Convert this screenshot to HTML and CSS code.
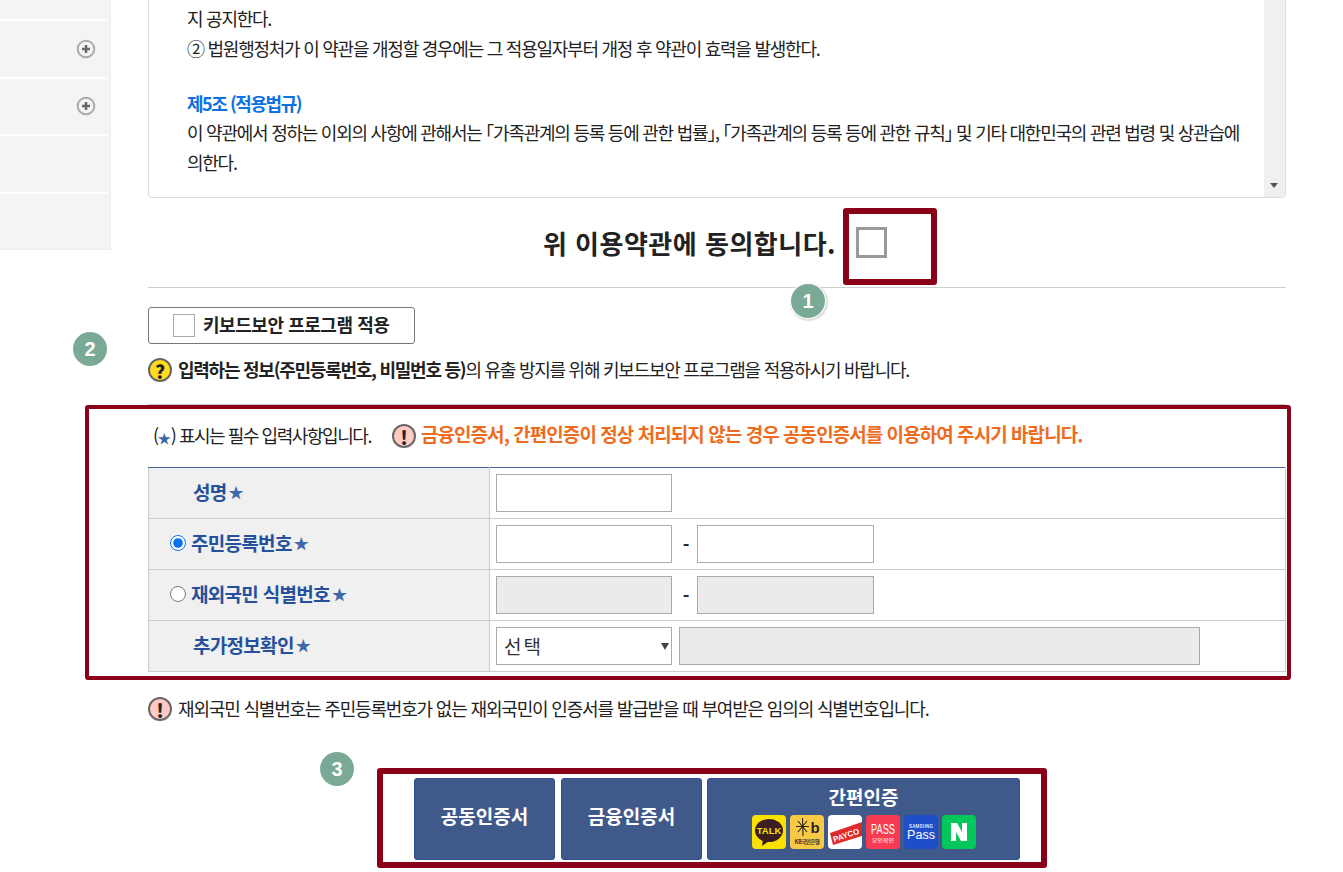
FILE: index.html
```html
<!DOCTYPE html>
<html lang="ko">
<head>
<meta charset="utf-8">
<title>이용약관 동의</title>
<link rel="stylesheet" href="styles.css">
</head>
<body>
<div class="page">
  <aside class="sidebar">
    <div class="side-row"></div>
    <div class="side-row"><svg class="plus" viewBox="0 0 20 20"><circle cx="10" cy="10" r="8.300"/><path d="M10 6v8M6 10h8"/></svg></div>
    <div class="side-row"><svg class="plus" viewBox="0 0 20 20"><circle cx="10" cy="10" r="8.300"/><path d="M10 6v8M6 10h8"/></svg></div>
    <div class="side-row"></div>
    <div class="side-row side-last"></div>
  </aside>
  <main class="main">
    <section class="terms">
      <div class="terms-text">
        <p>지 공지한다.</p>
        <p>② 법원행정처가 이 약관을 개정할 경우에는 그 적용일자부터 개정 후 약관이 효력을 발생한다.</p>
        <p class="blank">&nbsp;</p>
        <p class="article">제5조 (적용법규)</p>
        <p>이 약관에서 정하는 이외의 사항에 관해서는 ｢가족관계의 등록 등에 관한 법률｣, ｢가족관계의 등록 등에 관한 규칙｣ 및 기타 대한민국의 관련 법령 및 상관습에<br>의한다.</p>
      </div>
      <div class="scrollbar"><span class="scroll-arrow"></span></div>
    </section>
    <div class="agree">
      <span class="agree-text">위 이용약관에 동의합니다.</span>
      <span class="agree-check"></span>
    </div>
    <div class="kbd-btn"><span class="kbd-check"></span><span class="kbd-text">키보드보안 프로그램 적용</span></div>
    <p class="help"><span class="ico ico-q">?</span><span class="tx"><b>입력하는 정보(주민등록번호, 비밀번호 등)</b>의 유출 방지를 위해 키보드보안 프로그램을 적용하시기 바랍니다.</span></p>
    <div class="rule"></div>
    <div class="notice">
      <span class="req-note">(<i class="star">★</i>) 표시는 필수 입력사항입니다.</span>
      <span class="ico ico-ex">!</span>
      <strong class="warn">금융인증서, 간편인증이 정상 처리되지 않는 경우 공동인증서를 이용하여 주시기 바랍니다.</strong>
    </div>
    <table class="form">
      <tr>
        <th><span class="lbl lbl-plain">성명<i class="star">★</i></span></th>
        <td><input class="field f1" type="text"></td>
      </tr>
      <tr>
        <th><span class="lbl"><input class="radio" type="radio" name="idt" checked>주민등록번호<i class="star">★</i></span></th>
        <td><input class="field f1" type="text"><span class="dash">-</span><input class="field f2" type="text"></td>
      </tr>
      <tr>
        <th><span class="lbl"><input class="radio" type="radio" name="idt">재외국민 식별번호<i class="star">★</i></span></th>
        <td><input class="field f1 off" type="text"><span class="dash">-</span><input class="field f2 off" type="text"></td>
      </tr>
      <tr>
        <th><span class="lbl lbl-plain">추가정보확인<i class="star">★</i></span></th>
        <td><span class="sel-wrap"><select class="field f1 sel"><option>선택</option></select></span><input class="field f3 off" type="text"></td>
      </tr>
    </table>
    <p class="foot"><span class="ico ico-ex">!</span><span class="tx">재외국민 식별번호는 주민등록번호가 없는 재외국민이 인증서를 발급받을 때 부여받은 임의의 식별번호입니다.</span></p>
    <div class="actions">
      <button class="act act-a" type="button">공동인증서</button>
      <button class="act act-a" type="button">금융인증서</button>
      <button class="act act-b" type="button">
        <span class="act-title">간편인증</span>
        <span class="logos">
          <span class="logo l-talk"><svg viewBox="0 0 34 34"><ellipse cx="17" cy="15.500" rx="14" ry="11.500" fill="#3c1e1e"/><path d="M11 24l-1 7 7-5z" fill="#3c1e1e"/><text x="17" y="19" text-anchor="middle" class="t-talk">TALK</text></svg></span>
          <span class="logo l-kb"><svg viewBox="0 0 34 34"><path d="M8 6l9 11M17 6L8 17M12.500 3l.5 18M6 11.500h13" stroke="#2a2520" stroke-width="1.100" fill="none"/><text x="25" y="18" text-anchor="middle" class="t-kb">b</text><text x="17" y="29" text-anchor="middle" class="t-kbs">KB국민은행</text></svg></span>
          <span class="logo l-payco"><svg viewBox="0 0 34 34"><path d="M2 18L34 7v14L5 30z" fill="#e02a2a"/><text x="18" y="23" text-anchor="middle" transform="rotate(-19 18 20)" class="t-payco">PAYCO</text></svg></span>
          <span class="logo l-pass"><svg viewBox="0 0 34 34"><text x="17" y="19" text-anchor="middle" textLength="24" lengthAdjust="spacingAndGlyphs" class="t-pass">PASS</text><text x="17" y="27" text-anchor="middle" textLength="22" lengthAdjust="spacingAndGlyphs" class="t-pass-s">본인확인</text></svg></span>
          <span class="logo l-sp"><svg viewBox="0 0 34 34"><text x="17" y="13" text-anchor="middle" textLength="24" class="t-sp-s">SAMSUNG</text><text x="17" y="24" text-anchor="middle" class="t-sp">Pass</text></svg></span>
          <span class="logo l-n"><svg viewBox="0 0 34 34"><path d="M9 8h6l5 9V8h5v18h-6l-5-9v9H9z" fill="#fff"/></svg></span>
        </span>
      </button>
    </div>
  </main>

  <div class="mark mark-1"></div>
  <div class="mark mark-2"></div>
  <div class="mark mark-3"></div>
  <div class="badge badge-1">1</div>
  <div class="badge badge-2">2</div>
  <div class="badge badge-3">3</div>
</div>
</body>
</html>
```

FILE: styles.css
```css
* { box-sizing: border-box; }
html, body { margin: 0; padding: 0; background: #fff; }
body {
  font-family: "Noto Sans CJK KR", "Noto Sans", sans-serif;
  color: #222;
  font-size: 18px;
}
p { margin: 0; }
i { font-style: normal; }

.page {
  position: relative;
  display: flex;
  align-items: flex-start;
  width: 1343px;
  height: 872px;
  overflow: hidden;
}

/* side menu */
.sidebar {
  flex: none;
  width: 111px;
  margin-top: -36.500px;
  padding-right: 3px;
  background: #f4f4f4;
  border-bottom: 1px solid #ececec;
  border-right: 1px solid #efefef;
}
.side-row {
  display: flex;
  align-items: center;
  justify-content: flex-end;
  height: 57.500px;
  padding-right: 11px;
  border-bottom: 2px solid #fff;
}
.side-last { height: 55.500px; border-bottom: 0; }
.plus { width: 20px; height: 20px; }
.plus circle { fill: #f4f4f4; stroke: #aaa; stroke-width: 2; }
.plus path { stroke: #666; stroke-width: 2.500; fill: none; }

/* content */
.main {
  flex: none;
  width: 1138px;
  margin-left: 37px;
}
.terms {
  display: flex;
  height: 198px;
  border: 1px solid #ddd;
  border-top: 0;
  border-radius: 0 0 4px 4px;
}
.terms-text {
  flex: 1;
  padding: 4px 0 0 38px;
  font-size: 18px;
  line-height: 29.500px;
  letter-spacing: -1.250px;
  white-space: nowrap;
  color: #222;
}
.blank { height: 25.500px; line-height: 25.500px; }
.article { color: #0b72e0; font-weight: 700; letter-spacing: -1.450px; }
.scrollbar {
  position: relative;
  flex: none;
  width: 21px;
  background: #f0f0f0;
}
.scroll-arrow {
  position: absolute;
  left: 6px;
  bottom: 9px;
  border-left: 4.500px solid transparent;
  border-right: 4.500px solid transparent;
  border-top: 5px solid #555;
}

.agree {
  display: flex;
  align-items: center;
  justify-content: center;
  gap: 20px;
  height: 90px;
  padding-right: 4px;
  border-bottom: 1px solid #ccc;
}
.agree-text {
  font-size: 26px;
  font-weight: 700;
  letter-spacing: 0.500px;
  color: #222;
}
.agree-check {
  width: 31px;
  height: 31px;
  border: 3px solid #999;
  background: #fff;
}

.kbd-btn {
  display: flex;
  align-items: center;
  gap: 8px;
  width: 267px;
  height: 37px;
  margin-top: 19px;
  padding-left: 23px;
  border: 1px solid #777;
  border-radius: 3px;
  font-size: 18px;
  font-weight: 700;
  letter-spacing: -0.450px;
}
.kbd-check {
  flex: none;
  width: 22px;
  height: 23px;
  margin-left: 1px;
  border: 1px solid #aaa;
}
.kbd-text { padding-bottom: 3px; }

.ico {
  display: inline-flex;
  flex: none;
  align-items: center;
  justify-content: center;
  width: 24px;
  height: 24px;
  border: 2px solid #666;
  border-radius: 50%;
  font-size: 19px;
  font-weight: 900;
  line-height: 1;
  color: #222;
  letter-spacing: 0;
}
.ico-q { background: #ffdc1e; }
.ico-ex { background: #ffc9c4; }
.tx { padding-bottom: 2px; }

.help {
  display: flex;
  align-items: center;
  gap: 6px;
  height: 24px;
  margin-top: 14px;
  letter-spacing: -1.250px;
  white-space: nowrap;
}
.rule {
  height: 1px;
  margin-top: 22px;
  background: #ccc;
}
.notice {
  display: flex;
  align-items: center;
  height: 62px;
  padding-left: 5px;
  white-space: nowrap;
}
.req-note {
  width: 239px;
  padding-bottom: 2px;
  font-size: 18px;
  letter-spacing: -1.450px;
}
.star {
  color: #3f68a8;
  font-size: 13px;
  font-weight: 700;
  letter-spacing: 0;
}
.warn {
  margin-left: 5px;
  padding-bottom: 5px;
  color: #ee6c1e;
  font-size: 19px;
  font-weight: 700;
  letter-spacing: -0.950px;
}

.form {
  width: 1138px;
  border-collapse: collapse;
  table-layout: fixed;
}
.form tr { height: 51px; }
.form th, .form td {
  padding: 0;
  border: 1px solid #ccc;
}
.form tr:first-child th, .form tr:first-child td { border-top: 1px solid #44679c; }
.form th {
  width: 341px;
  background: #f0f0f0;
  text-align: left;
}
.form td { padding-left: 6px; }
.lbl {
  display: flex;
  align-items: center;
  padding: 0 0 3px 21px;
  color: #24509c;
  font-size: 19px;
  font-weight: 700;
  letter-spacing: -0.700px;
}
.lbl .star { margin-left: 2px; font-size: 15px; }
.lbl-plain { padding-left: 44px; }
.radio {
  width: 16px;
  height: 16px;
  margin: 0 5px 0 0;
  accent-color: #0a72f0;
}
.field {
  height: 38px;
  vertical-align: middle;
  border: 1px solid #aaa;
  border-radius: 0;
  background: #fff;
  font: inherit;
  padding: 0 8px;
}
.f1 { width: 176px; }
.f2 { width: 177px; }
.f3 { width: 521px; margin-left: 7px; }
.off { background: #ebebeb; }
.sel-wrap { position: relative; display: inline-block; vertical-align: middle; }
.sel-wrap::after {
  content: "";
  position: absolute;
  right: 3px;
  top: 16px;
  border-left: 4px solid transparent;
  border-right: 4px solid transparent;
  border-top: 7px solid #444;
}
.sel {
  display: block;
  appearance: none;
  padding: 0 0 2px 7px;
  font-size: 19px;
  letter-spacing: 2px;
  color: #333;
}
.dash {
  display: inline-block;
  width: 25px;
  padding-left: 3px;
  text-align: center;
  font-weight: 700;
  vertical-align: middle;
}

.foot {
  display: flex;
  align-items: center;
  gap: 6px;
  height: 24px;
  margin-top: 25px;
  letter-spacing: -1.170px;
  white-space: nowrap;
}
.actions {
  display: flex;
  gap: 6px;
  margin-top: 57px;
  margin-left: 266px;
}
.act {
  height: 82px;
  padding: 0;
  border: 1px solid #2f5090;
  border-radius: 3px;
  background: #3f5a8a;
  color: #fff;
  font-family: inherit;
  font-size: 19px;
  font-weight: 700;
}
.act-a { width: 141px; padding-bottom: 8px; }
.act-b {
  display: flex;
  flex-direction: column;
  align-items: center;
  width: 313px;
  margin-left: -1px;
  padding-top: 3px;
}
.act-title { line-height: 29px; }
.logos { display: flex; gap: 4px; margin-top: 4px; }
.logo {
  display: block;
  width: 34px;
  height: 34px;
  border-radius: 4px;
  overflow: hidden;
}
.logo svg { display: block; width: 34px; height: 34px; }
.l-talk { background: #fae100; }
.l-kb { background: #f8c945; }
.l-payco { background: #fff; }
.l-pass { background: #f73b50; }
.l-sp { background: #1f4fc8; }
.l-n { background: #03c75a; }
.t-talk { font: 700 9.500px "Liberation Sans", sans-serif; fill: #fae100; }
.t-kb { font: 700 15px "Liberation Sans", sans-serif; fill: #2a2520; }
.t-kbs { font: 700 5.500px "Noto Sans CJK KR", sans-serif; fill: #333; letter-spacing: -0.500px; }
.t-payco { font: 700 8px "Liberation Sans", sans-serif; fill: #fff; }
.t-pass { font: 400 14px "Liberation Sans", sans-serif; fill: #fff; }
.t-pass-s { font: 400 5px "Noto Sans CJK KR", sans-serif; fill: #fff; }
.t-sp { font: 400 12.500px "Liberation Sans", sans-serif; fill: #fff; }
.t-sp-s { font: 700 4.500px "Liberation Sans", sans-serif; fill: #dfe6ff; }

/* annotation overlay */
.mark {
  position: absolute;
  border: 5px solid #8a0018;
  border-radius: 3px;
  pointer-events: none;
}
.mark-1 { left: 843px; top: 208px; width: 94px; height: 77px; border-width: 6px; }
.mark-2 { left: 85px; top: 405px; width: 1206px; height: 275px; border-width: 4px; }
.mark-3 { left: 377px; top: 768px; width: 670px; height: 100px; border-width: 6px; }
.badge {
  position: absolute;
  width: 34px;
  height: 34px;
  border-radius: 50%;
  background: #7aa996;
  color: #fff;
  font: 700 20px/34px "Liberation Sans", sans-serif;
  text-align: center;
}
.badge-1 { left: 791px; top: 284px; box-shadow: 0 0 0 1px #fff, 1px 1px 1px 2px #ddd; }
.badge-2 { left: 73px; top: 332px; }
.badge-3 { left: 320px; top: 752px; }
```
